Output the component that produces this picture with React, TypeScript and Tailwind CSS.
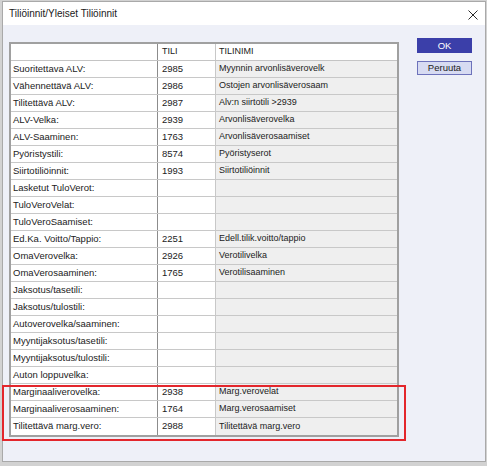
import React from "react";

const rows: [string, string, string][] = [
  ["Suoritettava ALV:", "2985", "Myynnin arvonlisäverovelk"],
  ["Vähennettävä ALV:", "2986", "Ostojen arvonlisäverosaam"],
  ["Tilitettävä ALV:", "2987", "Alv:n siirtotili >2939"],
  ["ALV-Velka:", "2939", "Arvonlisäverovelka"],
  ["ALV-Saaminen:", "1763", "Arvonlisäverosaamiset"],
  ["Pyöristystili:", "8574", "Pyöristyserot"],
  ["Siirtotiliöinnit:", "1993", "Siirtotiliöinnit"],
  ["Lasketut TuloVerot:", "", ""],
  ["TuloVeroVelat:", "", ""],
  ["TuloVeroSaamiset:", "", ""],
  ["Ed.Ka. Voitto/Tappio:", "2251", "Edell.tilik.voitto/tappio"],
  ["OmaVerovelka:", "2926", "Verotilivelka"],
  ["OmaVerosaaminen:", "1765", "Verotilisaaminen"],
  ["Jaksotus/tasetili:", "", ""],
  ["Jaksotus/tulostili:", "", ""],
  ["Autoverovelka/saaminen:", "", ""],
  ["Myyntijaksotus/tasetili:", "", ""],
  ["Myyntijaksotus/tulostili:", "", ""],
  ["Auton loppuvelka:", "", ""],
  ["Marginaaliverovelka:", "2938", "Marg.verovelat"],
  ["Marginaaliverosaaminen:", "1764", "Marg.verosaamiset"],
  ["Tilitettävä marg.vero:", "2988", "Tilitettävä marg.vero"],
];

export default function App() {
  return (
    <div
      className="w-[487px] h-[466px] bg-[#d2d2d2] relative overflow-hidden pt-[1px]"
      style={{ fontFamily: '"Liberation Sans", Arial, sans-serif' }}
    >
      <div className="ml-[2px] w-[484px] h-[461px] border border-[#a9a9a9] bg-[#eef0f8] flex flex-col">
        {/* title bar */}
        <div className="h-[23px] bg-white flex items-center justify-between pl-[6px] pr-[7px] shrink-0">
          <span className="text-[10px] text-[#1a1a1a] leading-none">Tiliöinnit/Yleiset Tiliöinnit</span>
          <svg width="10" height="10" viewBox="0 0 10 10" className="mt-[2px]">
            <path d="M0.5 0.5 L9.5 9.5 M9.5 0.5 L0.5 9.5" stroke="#2a2a2a" strokeWidth="1" fill="none" />
          </svg>
        </div>
        {/* body */}
        <div className="flex pl-[6px] pt-[17px]">
          <div className="w-[390px] border-2 border-[#a0a0a0] bg-white">
            <div className="grid grid-cols-[147px_58px_1fr] h-[17px] border-b border-[#c4c4c4] text-[9px] text-[#222]">
              <div className="border-r border-[#8c8c8c]" />
              <div className="border-r border-[#c8c8c8] pl-[4px] flex items-center">TILI</div>
              <div className="pl-[3px] flex items-center">TILINIMI</div>
            </div>
            {rows.map(([label, tili, name], i) => (
              <div
                key={i}
                className={
                  "grid grid-cols-[147px_58px_1fr] h-[17px] text-[#222] " +
                  (i < rows.length - 1 ? "border-b border-[#c8c8c8]" : "")
                }
              >
                <div className="border-r border-[#8c8c8c] pl-[2px] flex items-center text-[9.5px] whitespace-nowrap overflow-hidden">
                  {label}
                </div>
                <div className="border-r border-[#c8c8c8] pl-[4px] flex items-center text-[9.5px]">{tili}</div>
                <div className="bg-[#efefef] pl-[3px] flex items-center text-[9px] whitespace-nowrap overflow-hidden">
                  {name}
                </div>
              </div>
            ))}
          </div>
          <div className="ml-[18px] -mt-[4px] flex flex-col gap-[8px]">
            <button className="w-[55px] h-[15px] bg-[#3b3fa9] text-white text-[9.5px] flex items-center justify-center leading-none">
              OK
            </button>
            <button className="w-[55px] h-[14px] bg-[#d7dbf2] border border-[#6d72bb] text-[#222] text-[9.5px] flex items-center justify-center leading-none">
              Peruuta
            </button>
          </div>
        </div>
      </div>
      {/* red annotation box */}
      <div className="absolute left-[2px] top-[385px] w-[404px] h-[56px] border-2 border-[#e3262c] pointer-events-none" />
    </div>
  );
}
